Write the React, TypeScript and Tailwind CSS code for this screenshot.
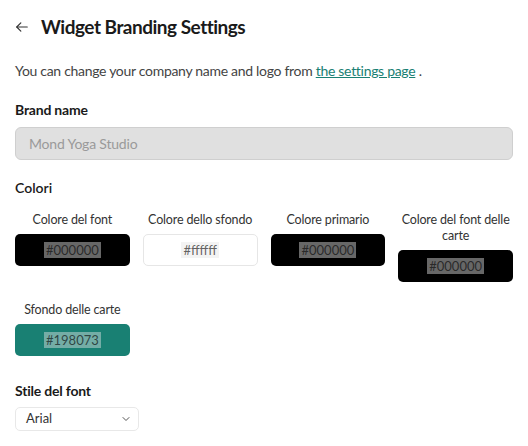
import { ChevronDown } from "lucide-react";

type Swatch = { label: string; value: string; bg: string; border?: boolean };

const COLORI: Swatch[] = [
  { label: "Colore del font", value: "#000000", bg: "bg-black" },
  { label: "Colore dello sfondo", value: "#ffffff", bg: "bg-white", border: true },
  { label: "Colore primario", value: "#000000", bg: "bg-black" },
  { label: "Colore del font delle carte", value: "#000000", bg: "bg-black" },
  { label: "Sfondo delle carte", value: "#198073", bg: "bg-[#198073]" },
];

function ColorField({ s }: { s: Swatch }) {
  return (
    <div className="flex flex-col items-center">
      <span className="mb-[6px] text-center text-[12.5px] leading-[16px] tracking-[-0.15px] text-[#333]">
        {s.label}
      </span>
      <div
        className={`flex h-[32px] w-full items-center justify-center rounded-[5px] ${s.bg} ${
          s.border ? "border border-[#e6e6e6]" : ""
        }`}
      >
        <span className="bg-[rgba(228,228,228,0.45)] px-[2px] text-[13px] leading-[16px] text-[rgba(0,0,0,0.62)]">
          {s.value}
        </span>
      </div>
    </div>
  );
}

export default function App() {
  return (
    <div className="min-h-screen bg-white px-[15px] pt-[13px] font-['Lato',sans-serif] text-[#1a1a1a]">
      {/* Header */}
      <div className="flex items-center gap-[12px]">
        <svg width="14" height="14" viewBox="0 0 24 24" fill="none" stroke="#333" strokeWidth="2" strokeLinecap="round" strokeLinejoin="round">
          <line x1="21" y1="12" x2="3" y2="12" />
          <polyline points="10 19 3 12 10 5" />
        </svg>
        <h1 className="text-[19px] font-bold tracking-[-0.5px]">Widget Branding Settings</h1>
      </div>

      <p className="mt-[18px] text-[14px] tracking-[-0.3px] text-[#444]">
        You can change your company name and logo from{" "}
        <a href="#" className="text-[#198073] underline">
          the settings page
        </a>{" "}
        .
      </p>

      {/* Brand name */}
      <div className="mt-[16px]">
        <label className="text-[14px] font-bold tracking-[-0.2px]">Brand name</label>
        <div className="mt-[6px] flex h-[33px] items-center rounded-[6px] border border-[#cfcfcf] bg-[#e0e0e0] px-[13px] text-[14px] tracking-[-0.2px] text-[#9a9a9a]">
          Mond Yoga Studio
        </div>
      </div>

      {/* Colori */}
      <div className="mt-[17px]">
        <div className="text-[14px] font-semibold">Colori</div>
        <div className="mt-[14px] grid grid-cols-4 gap-x-[13px] gap-y-[20px]">
          {COLORI.map((s) => (
            <ColorField key={s.label} s={s} />
          ))}
        </div>
      </div>

      {/* Stile del font */}
      <div className="mt-[24px]">
        <div className="text-[14px] font-bold tracking-[-0.2px]">Stile del font</div>
        <div className="mt-[6px] flex h-[24px] w-[124px] items-center justify-between rounded-[5px] border border-[#e8e8e8] pl-[10px] pr-[6px] text-[13px] text-[#333]">
          Arial
          <ChevronDown size={12} className="text-[#555]" />
        </div>
      </div>
    </div>
  );
}
